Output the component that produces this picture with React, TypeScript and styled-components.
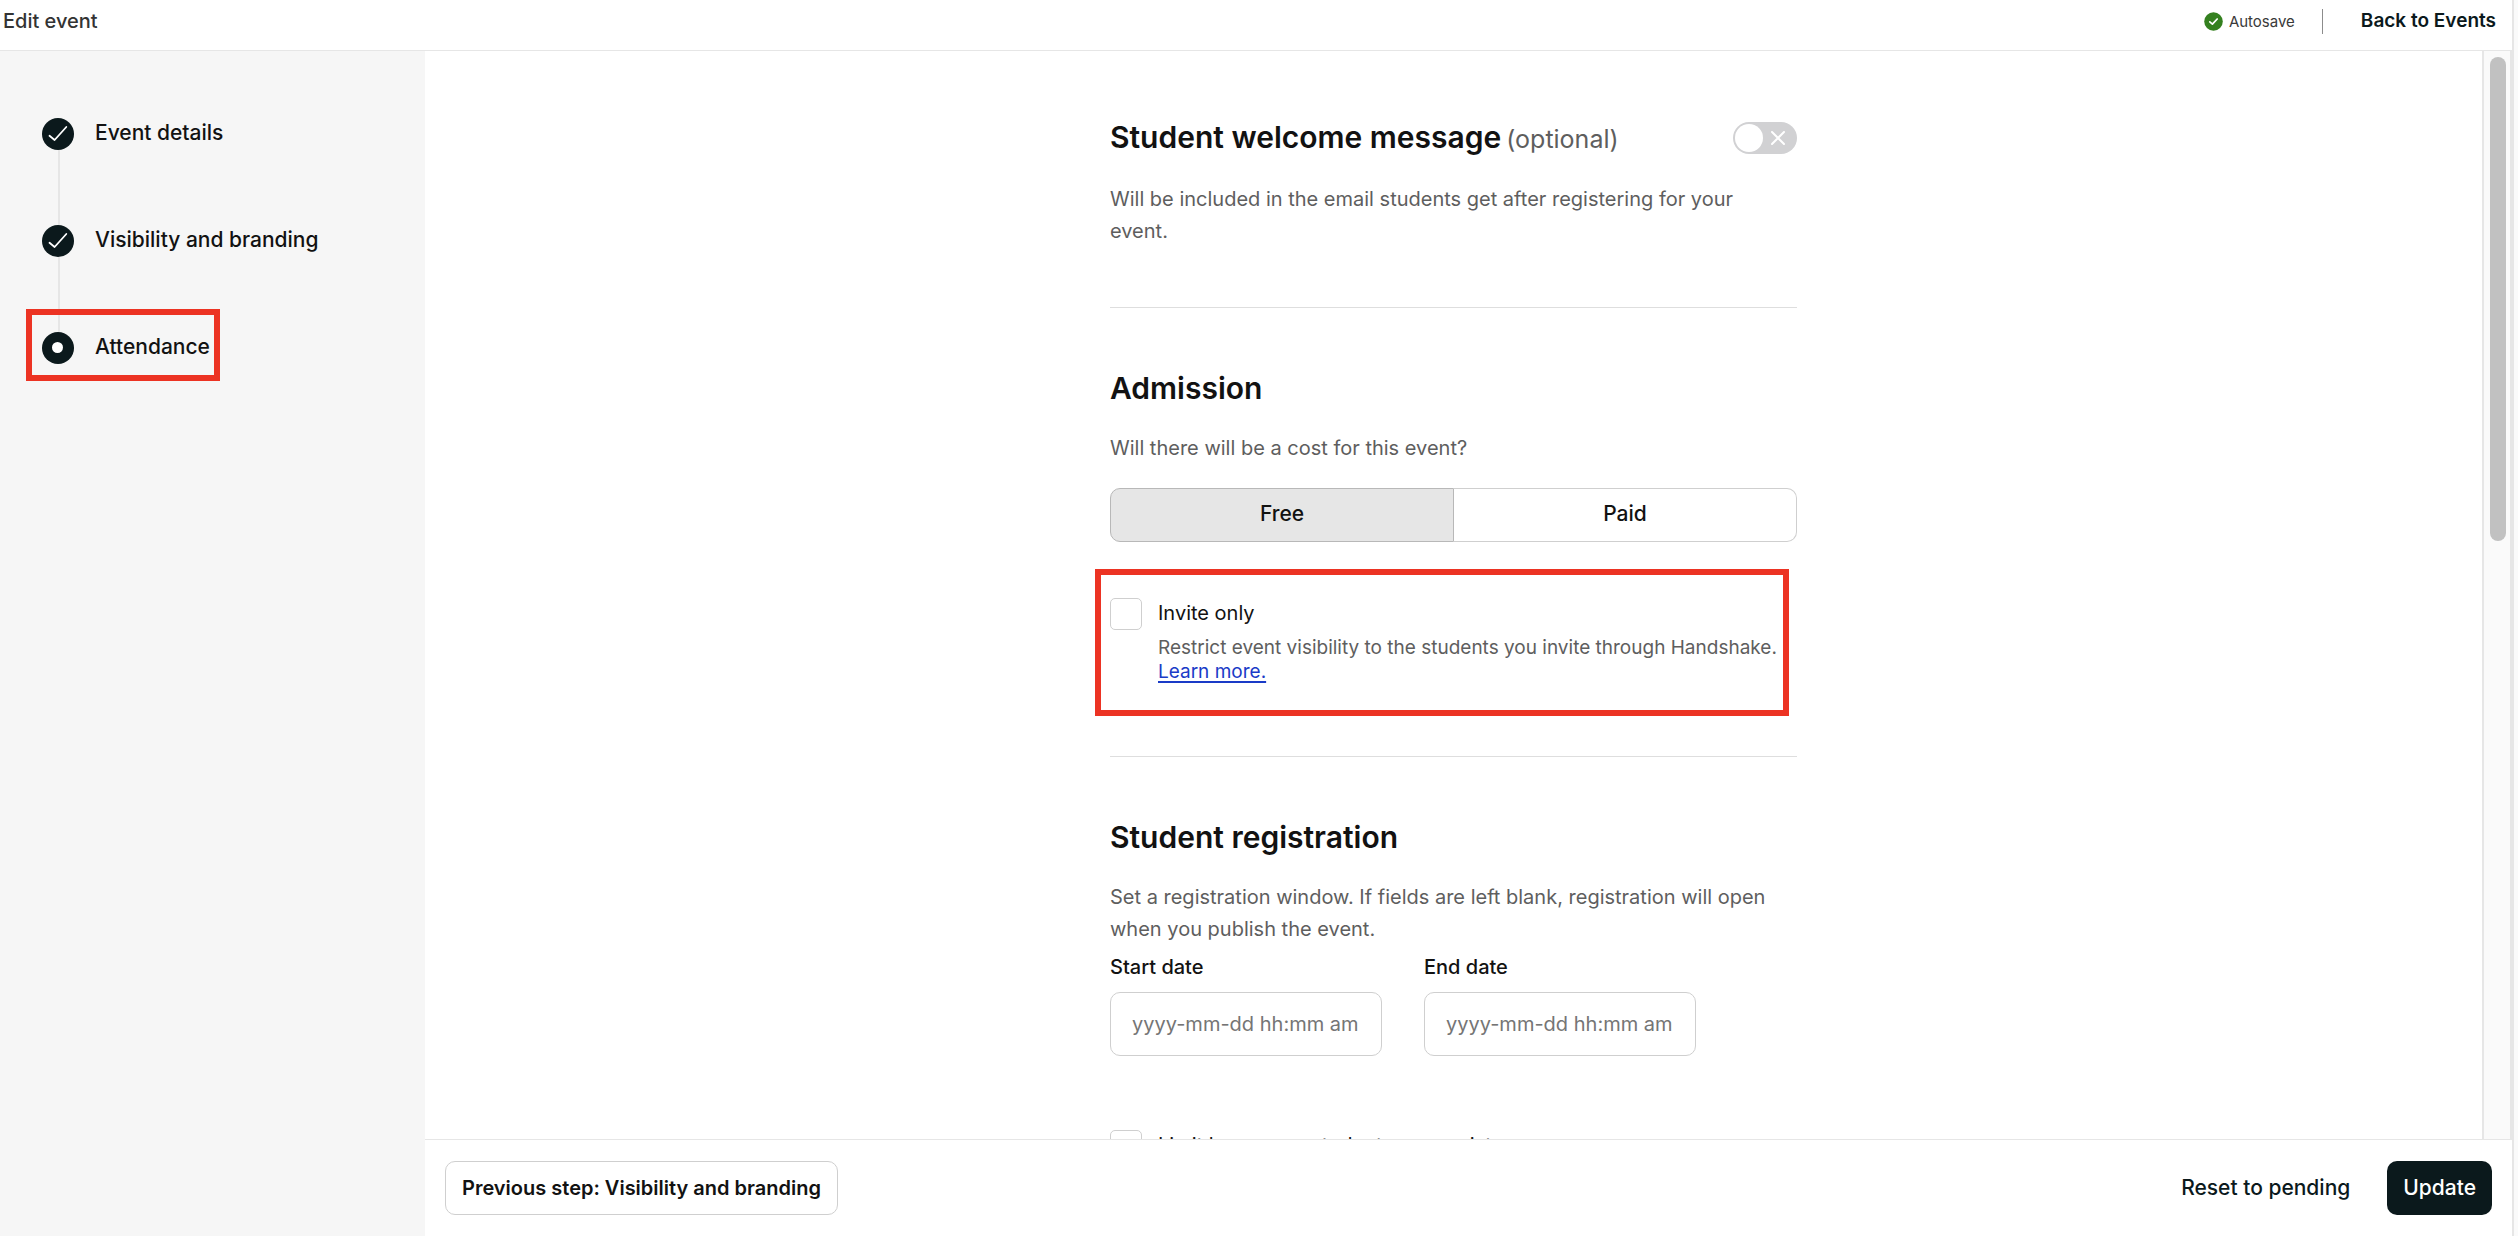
import React from 'react';
import styled, { createGlobalStyle, css } from 'styled-components';

const ink = '#121212';
const dark = '#0b191c';
const muted = '#5e5e5e';
const line = '#e6e6e6';
const outline = '#cfcfcf';
const red = '#ec3323';

const GlobalStyle = createGlobalStyle`
  * { box-sizing: border-box; }
  body {
    margin: 0;
    background: #fff;
    color: ${ink};
    font-family: Inter, "Liberation Sans", sans-serif;
    font-size: 20px;
    line-height: 32px;
  }
  button, input { font: inherit; color: inherit; margin: 0; }
  h2, p, ol { margin: 0; padding: 0; }
`;

const Page = styled.div`
  height: 100vh;
  display: flex;
  flex-direction: column;
  background: #fff;
  border-right: 4px solid #fafafa;
`;

const Frame = styled.div`
  flex: 1;
  min-height: 0;
  display: flex;
  flex-direction: column;
  border-right: 2px solid ${line};
`;

const TopBar = styled.header`
  display: flex;
  align-items: center;
  height: 51px;
  padding: 0 16px 8px 3px;
  border-bottom: 1px solid ${line};
`;

const PageTitle = styled.span`
  flex: 1;
  color: #333;
  font-weight: 500;
`;

const SaveStatus = styled.span`
  display: flex;
  align-items: center;
  gap: 6px;
  padding-right: 27px;
  margin-right: 38px;
  border-right: 1px solid #8c8c8c;
  color: #3a3a3a;
  font-size: 15px;
  line-height: 25px;
`;

const BackLink = styled.a`
  color: ${dark};
  font-size: 19px;
  font-weight: 600;
  text-decoration: none;
`;

const Body = styled.div`
  flex: 1;
  min-height: 0;
  display: flex;
`;

const Sidebar = styled.nav`
  flex: none;
  width: 425px;
  padding: 67px 42px;
  background: #f6f6f6;
`;

const StepList = styled.ol`
  display: flex;
  flex-direction: column;
  gap: 75px;
  list-style: none;
`;

const Step = styled.li`
  position: relative;
  display: flex;
  width: max-content;

  &:not(:last-child)::before {
    content: '';
    position: absolute;
    left: 16px;
    top: 32px;
    width: 2px;
    height: 75px;
    background: ${line};
  }
`;

const StepButton = styled.button`
  display: flex;
  align-items: center;
  gap: 21px;
  height: 32px;
  padding: 0;
  border: 0;
  background: none;
  color: ${ink};
  font-size: 21px;
  font-weight: 500;
`;

const StepName = styled.span`
  padding-bottom: 2px;
`;

const Highlight = styled.span<{ $area: 'step' | 'option' }>`
  position: absolute;
  border: 6px solid ${red};
  pointer-events: none;
  inset: ${(p) => (p.$area === 'step' ? '-23px -10px -17px -16px' : '-29px 8px -32px -15px')};
`;

const Main = styled.main`
  flex: 1;
  min-width: 0;
  display: flex;
  flex-direction: column;
`;

const Viewport = styled.div`
  flex: 1;
  min-height: 0;
  display: flex;
`;

const Scroller = styled.div`
  flex: 1;
  min-width: 0;
  overflow: hidden;
`;

const ScrollTrack = styled.div`
  flex: none;
  width: 30px;
  padding: 6px;
  border: solid ${line};
  border-width: 0 2px;
  background: #fafafa;
`;

const ScrollThumb = styled.div`
  width: 16px;
  height: 45%;
  border-radius: 8px;
  background: #c1c1c1;
`;

const Column = styled.form`
  width: 100%;
  max-width: 687px;
  margin: 0 auto;
  padding-top: 6px;
`;

const Section = styled.section`
  padding: 60px 0;
  & + & { border-top: 1px solid #dedede; }
`;

const HeadingRow = styled.div`
  display: flex;
  align-items: center;
  justify-content: space-between;
  margin-bottom: 24px;
`;

const Heading = styled.h2`
  font-size: 30px;
  font-weight: 600;
  line-height: 40px;
`;

const Optional = styled.span`
  margin-left: 5px;
  color: ${muted};
  font-size: 25px;
  font-weight: 400;
`;

const Text = styled.p`
  padding-right: 20px;
  color: ${muted};
`;

const Toggle = styled.label`
  display: flex;
  align-items: center;
  justify-content: space-between;
  width: 64px;
  height: 32px;
  padding: 0 12px 0 2px;
  border-radius: 16px;
  background: #d1d1d3;

  &::before {
    content: '';
    width: 28px;
    height: 28px;
    border-radius: 50%;
    background: #fff;
  }
`;

const HiddenInput = styled.input`
  position: absolute;
  width: 1px;
  height: 1px;
  margin: 0;
  opacity: 0;
`;

const Segments = styled.div`
  display: flex;
  margin-top: 24px;
`;

const Segment = styled.button<{ $selected?: boolean }>`
  flex: 1;
  height: 54px;
  padding: 0 0 2px;
  border: 1px solid ${outline};
  background: #fff;
  color: ${ink};
  font-size: 21px;
  font-weight: 500;

  &:first-child { border-radius: 10px 0 0 10px; }
  &:last-child { border-radius: 0 10px 10px 0; border-left: 0; }

  ${(p) => p.$selected && css`
    background: #e6e6e6;
    border-color: #b8b8b8;
  `}
`;

const Option = styled.div<{ $last?: boolean }>`
  position: relative;
  display: grid;
  grid-template-columns: 32px 1fr;
  column-gap: 16px;
  row-gap: 6px;
  margin-top: ${(p) => (p.$last ? '74px' : '56px')};
  margin-bottom: 12px;
`;

const Checkbox = styled.input`
  appearance: none;
  width: 32px;
  height: 32px;
  border: 1px solid ${outline};
  border-radius: 5px;
  background: #fff;
`;

const OptionLabel = styled.label`
  line-height: 30px;
  color: ${ink};
`;

const Hint = styled.p`
  grid-column: 2;
  color: ${muted};
  font-size: 19px;
  line-height: 24px;
`;

const TextLink = styled.a`
  display: block;
  width: max-content;
  color: #1a3bc7;
  text-decoration: underline;
  text-decoration-thickness: 2px;
  text-underline-offset: 3px;
`;

const Fields = styled.div`
  display: flex;
  gap: 42px;
  margin-top: 6px;
`;

const Field = styled.div`
  display: flex;
  flex-direction: column;
  gap: 9px;
  width: 272px;
`;

const FieldLabel = styled.label`
  font-weight: 500;
`;

const FieldInput = styled.input`
  width: 100%;
  height: 64px;
  padding: 0 21px;
  border: 1px solid ${outline};
  border-radius: 10px;
  background: #fff;
  &::placeholder { color: #757575; opacity: 1; }
`;

const Footer = styled.footer`
  flex: none;
  display: flex;
  align-items: center;
  height: 97px;
  padding: 0 20px;
  border-top: 1px solid ${line};
`;

const Button = styled.button<{ $kind: 'outline' | 'plain' | 'solid' }>`
  height: 54px;
  padding: 0 16px;
  border: 1px solid transparent;
  border-radius: 10px;
  background: none;
  color: ${dark};
  font-size: 21px;
  font-weight: 500;

  ${(p) => p.$kind === 'outline' && css`
    margin-right: auto;
    border-color: ${outline};
    color: ${ink};
    font-size: 20px;
    font-weight: 600;
  `}
  ${(p) => p.$kind === 'plain' && css`
    margin-right: 20px;
  `}
  ${(p) => p.$kind === 'solid' && css`
    padding: 0 15px;
    background: ${dark};
    color: #fff;
  `}
`;

const DoneIcon = () => (
  <svg width="32" height="32" viewBox="0 0 32 32" aria-hidden="true">
    <circle cx="16" cy="16" r="16" fill={dark} />
    <path d="M7.5 17.8 12.6 22 24.3 9" fill="none" stroke="#fff" strokeWidth="1.8" strokeLinecap="round" strokeLinejoin="round" />
  </svg>
);

const CurrentIcon = () => (
  <svg width="32" height="32" viewBox="0 0 32 32" aria-hidden="true">
    <circle cx="16" cy="16" r="16" fill={dark} />
    <circle cx="15.5" cy="15.5" r="5.5" fill="#fff" />
  </svg>
);

const SavedIcon = () => (
  <svg width="19" height="19" viewBox="0 0 19 19" aria-hidden="true">
    <circle cx="9.5" cy="9.5" r="9.3" fill="#34801f" />
    <path d="M5.8 9.8 8.4 12.2 13.2 7" fill="none" stroke="#fff" strokeWidth="1.7" strokeLinecap="round" strokeLinejoin="round" />
  </svg>
);

const CrossIcon = () => (
  <svg width="14" height="14" viewBox="0 0 14 14" aria-hidden="true">
    <path d="M1 1 13 13M13 1 1 13" stroke="#fff" strokeWidth="2" strokeLinecap="round" />
  </svg>
);

const steps = [
  { name: 'Event details', current: false },
  { name: 'Visibility and branding', current: false },
  { name: 'Attendance', current: true },
];

const dates = [
  { id: 'start-date', label: 'Start date' },
  { id: 'end-date', label: 'End date' },
];

export default function App() {
  return (
    <Page>
      <GlobalStyle />
      <Frame>
        <TopBar>
          <PageTitle>Edit event</PageTitle>
          <SaveStatus><SavedIcon />Autosave</SaveStatus>
          <BackLink href="#events">Back to Events</BackLink>
        </TopBar>
        <Body>
          <Sidebar>
            <StepList>
              {steps.map((s) => (
                <Step key={s.name}>
                  <StepButton type="button">
                    {s.current ? <CurrentIcon /> : <DoneIcon />}
                    <StepName>{s.name}</StepName>
                  </StepButton>
                  {s.current && <Highlight $area="step" />}
                </Step>
              ))}
            </StepList>
          </Sidebar>
          <Main>
            <Viewport>
              <Scroller>
                <Column>
                  <Section>
                    <HeadingRow>
                      <Heading>Student welcome message<Optional>(optional)</Optional></Heading>
                      <Toggle aria-label="Student welcome message">
                        <HiddenInput type="checkbox" />
                        <CrossIcon />
                      </Toggle>
                    </HeadingRow>
                    <Text>Will be included in the email students get after registering for your event.</Text>
                  </Section>
                  <Section>
                    <HeadingRow><Heading>Admission</Heading></HeadingRow>
                    <Text>Will there will be a cost for this event?</Text>
                    <Segments>
                      <Segment type="button" $selected>Free</Segment>
                      <Segment type="button">Paid</Segment>
                    </Segments>
                    <Option>
                      <Checkbox type="checkbox" id="invite-only" />
                      <OptionLabel htmlFor="invite-only">Invite only</OptionLabel>
                      <Hint>
                        Restrict event visibility to the students you invite through Handshake.
                        <TextLink href="#learn-more">Learn more.</TextLink>
                      </Hint>
                      <Highlight $area="option" />
                    </Option>
                  </Section>
                  <Section>
                    <HeadingRow><Heading>Student registration</Heading></HeadingRow>
                    <Text>Set a registration window. If fields are left blank, registration will open when you publish the event.</Text>
                    <Fields>
                      {dates.map((d) => (
                        <Field key={d.id}>
                          <FieldLabel htmlFor={d.id}>{d.label}</FieldLabel>
                          <FieldInput id={d.id} type="text" placeholder="yyyy-mm-dd hh:mm am" />
                        </Field>
                      ))}
                    </Fields>
                    <Option $last>
                      <Checkbox type="checkbox" id="limit" />
                      <OptionLabel htmlFor="limit">Limit how many students can register</OptionLabel>
                    </Option>
                  </Section>
                </Column>
              </Scroller>
              <ScrollTrack><ScrollThumb /></ScrollTrack>
            </Viewport>
            <Footer>
              <Button type="button" $kind="outline">Previous step: Visibility and branding</Button>
              <Button type="button" $kind="plain">Reset to pending</Button>
              <Button type="button" $kind="solid">Update</Button>
            </Footer>
          </Main>
        </Body>
      </Frame>
    </Page>
  );
}
